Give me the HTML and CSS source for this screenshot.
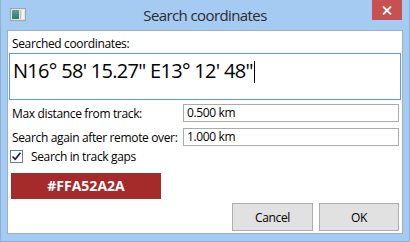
FILE: index.html
```html
<!DOCTYPE html>
<html>
  <head>
    <meta charset="utf-8" />
    <title>Search coordinates</title>
    <meta name="viewport" content="width=device-width, initial-scale=1" />
    <link rel="stylesheet" href="styles.css">
  </head>
  <body>
    <div class="window">
      <div class="titlebar">
        <span class="app-icon">
          <svg width="16" height="13" viewBox="0 0 16 13">
            <defs>
              <linearGradient id="ico" x1="0" y1="0" x2="0" y2="1">
                <stop offset="0" stop-color="#5f9f9a" />
                <stop offset="1" stop-color="#2f7a62" />
              </linearGradient>
            </defs>
            <rect x="0.5" y="0.5" width="15" height="12" fill="#e6e6e6" stroke="#a0a4a8" />
            <rect x="2" y="2" width="7" height="9" fill="url(#ico)" />
            <rect x="10" y="2" width="1" height="9" fill="#b8bcc0" />
            <rect x="12" y="2" width="2" height="9" fill="#f4f4f4" />
          </svg>
        </span>
        <div class="title">Search coordinates</div>
        <button class="close-button" aria-label="Close">
          <svg width="10" height="9" viewBox="0 0 10 9">
            <path d="M1 0.5 L9 8.5 M9 0.5 L1 8.5" stroke="#fff" stroke-width="1.8" />
          </svg>
        </button>
      </div>

      <div class="client">
        <div class="field-label">Searched coordinates:</div>
        <div class="coords-box">N16° 58' 15.27" E13° 12' 48"<span class="caret"></span></div>

        <div class="form-row">
          <div class="row-label">Max distance from track:</div>
          <div class="text-input">0.500 km</div>
        </div>
        <div class="form-row second">
          <div class="row-label">Search again after remote over:</div>
          <div class="text-input">1.000 km</div>
        </div>

        <div class="check-row">
          <span class="checkbox">
            <svg width="11" height="11" viewBox="0 0 11 11">
              <path d="M1.5 5.5 L4.2 8.3 L9.5 1.8" fill="none" stroke="#222" stroke-width="1.7" />
            </svg>
          </span>
          <span>Search in track gaps</span>
        </div>

        <div class="color-swatch">#FFA52A2A</div>

        <div class="dialog-buttons">
          <button class="dlg-button cancel">Cancel</button>
          <button class="dlg-button ok">OK</button>
        </div>
      </div>
    </div>
  </body>
</html>
```

FILE: styles.css
```css
body {
  margin: 0;
  font-family: "Open Sans", "Noto Sans", sans-serif;
  font-size: 12px;
  letter-spacing: -0.35px;
  color: #000;
}

.window {
  width: 410px;
  height: 242px;
  box-sizing: border-box;
  background-color: #a6cbf3;
  border: 1px solid #8eb0d6;
  border-top: none;
  display: flex;
  flex-direction: column;
}

.titlebar {
  height: 30px;
  display: grid;
  grid-template-columns: 1fr auto 1fr;
  align-items: start;
}

.app-icon {
  margin: 8px 0 0 9px;
  height: 13px;
  justify-self: start;
}

.app-icon svg {
  display: block;
}

.title {
  font-size: 15px;
  letter-spacing: -0.6px;
  line-height: 30px;
  color: #2b2b2b;
}

.close-button {
  justify-self: end;
  width: 30px;
  height: 20px;
  margin-right: 7px;
  border: none;
  padding: 0;
  background-color: #c75050;
  display: flex;
  align-items: center;
  justify-content: center;
}

.close-button svg {
  display: block;
}

.client {
  flex: 1;
  margin: 0 6px 7px 6px;
  background-color: #fff;
  border: 1px solid #9eb0c6;
  display: flex;
  flex-direction: column;
}

.field-label {
  padding: 4px 0 0 4px;
  line-height: 17px;
}

.coords-box {
  margin: 1px 1px 0 1px;
  height: 47px;
  box-sizing: border-box;
  border: 1px solid #569de5;
  padding: 4px 0 0 3px;
  font-size: 20px;
  letter-spacing: -0.7px;
  line-height: 26px;
}

.caret {
  display: inline-block;
  width: 1px;
  height: 22px;
  margin-left: 1px;
  background-color: #000;
  vertical-align: -5px;
}

.form-row {
  display: grid;
  grid-template-columns: 175px 1fr;
  align-items: center;
  margin-top: 4px;
  height: 18px;
}

.form-row.second {
  margin-top: 6px;
}

.row-label {
  padding-left: 4px;
  white-space: nowrap;
}

.text-input {
  height: 18px;
  box-sizing: border-box;
  border: 1px solid #ababab;
  margin-right: 3px;
  padding-left: 3px;
  line-height: 16px;
}

.check-row {
  display: flex;
  align-items: center;
  margin-top: 4px;
  height: 13px;
}

.checkbox {
  width: 13px;
  height: 13px;
  box-sizing: border-box;
  margin: 0 8px 0 2px;
  border: 1px solid #5b7fae;
  background-color: #fff;
  display: flex;
  align-items: center;
  justify-content: center;
}

.checkbox svg {
  display: block;
}

.color-swatch {
  margin: 10px 0 0 3px;
  width: 150px;
  height: 26px;
  background-color: #a52a2a;
  color: #fff;
  font-weight: bold;
  font-size: 14px;
  letter-spacing: 0;
  line-height: 26px;
  text-align: center;
}

.dialog-buttons {
  display: flex;
  justify-content: flex-end;
  gap: 6px;
  margin: 4px 3px 0 0;
}

.dlg-button {
  height: 28px;
  width: 81px;
  border: 1px solid #adadad;
  background-color: #e1e1e1;
  font-family: "Open Sans", "Noto Sans", sans-serif;
  font-size: 12px;
  letter-spacing: -0.35px;
  color: #000;
  padding: 0;
}

.dlg-button.ok {
  width: 80px;
}
```
